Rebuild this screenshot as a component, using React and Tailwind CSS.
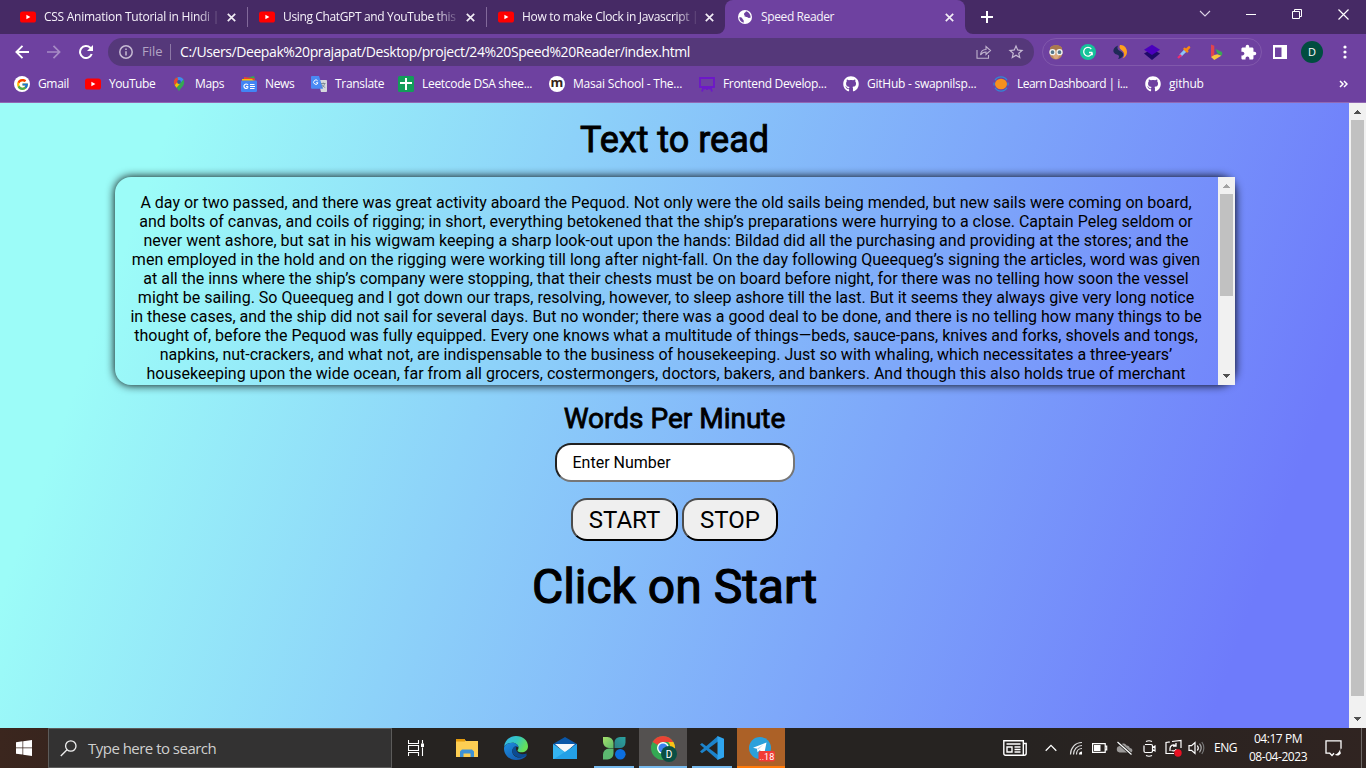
import React from 'react';
import { FcGoogle } from 'react-icons/fc';
import { FaGithub } from 'react-icons/fa';
import { MdExtension, MdStarBorder } from 'react-icons/md';

const YouTube = () => (
  <svg width="16" height="16" viewBox="0 0 16 16" className="shrink-0">
    <rect x="0" y="2.4" width="16" height="11.2" rx="2.6" fill="#f00" />
    <path d="M6.4 5.7v4.6L10.4 8z" fill="#fff" />
  </svg>
);

const Close = () => (
  <svg width="9" height="9" viewBox="0 0 9 9" className="shrink-0">
    <path d="M.8.8l7.4 7.4M8.2.8L.8 8.2" stroke="#f1ecf5" strokeWidth="1.7" />
  </svg>
);

const tabs = [
  { title: 'CSS Animation Tutorial in Hindi |', cls: 'pl-[20px] w-[248px]', track: 'tracking-[-0.26px]' },
  { title: 'Using ChatGPT and YouTube this', cls: 'pl-[11px] w-[239px]', track: 'tracking-[-0.36px]' },
  { title: 'How to make Clock in Javascript |', cls: 'pl-[11px] w-[239px]', track: 'tracking-[-0.32px]' },
];

function TabStrip() {
  return (
    <div className="flex h-[34px] bg-[#462a65] text-[12px] text-[#f6f2fa]">
      {tabs.map((t, i) => (
        <div key={t.title} className={`relative flex shrink-0 items-center ${t.cls}`}>
          <YouTube />
          <div className={`ml-[8px] w-[174px] whitespace-nowrap [mask-image:linear-gradient(90deg,#000_88%,rgba(0,0,0,0.15)_100%)] ${t.track}`}>
            {t.title}
          </div>
          <div className="ml-[9px] flex"><Close /></div>
          {i < 2 && <div className="absolute right-0 top-[7px] h-[20px] w-px bg-[#82699b]" />}
        </div>
      ))}
      <div className="relative -ml-px flex w-[240px] shrink-0 items-center rounded-t-[8px] bg-[#6e41a0] pl-[13px]">
        <svg className="absolute -left-[8px] bottom-0" width="8" height="8"><path d="M8 0v8H0a8 8 0 0 0 8-8z" fill="#6e41a0" /></svg>
        <svg className="absolute -right-[8px] bottom-0" width="8" height="8"><path d="M0 0v8h8a8 8 0 0 1-8-8z" fill="#6e41a0" /></svg>
        <svg width="14" height="14" viewBox="0 0 14 14" className="shrink-0">
          <circle cx="7" cy="7" r="7" fill="#fff" />
          <path d="M1.2 7.6c1.6-.6 2.8 0 3.2 1.2.3 1 1.400 1 1.300 2v1.900C3.300 12.200 1.400 10.300 1.200 7.600zM8 1.300c-.2 1.500-1.600 1.300-2 2.500-.3 1 .8 1.200.6 2.200-.1.800 1.200 1 2.200.9 1-.1 1 .8 2 1 .7.1 1.300-.2 1.900-.5C12.600 4.400 10.800 1.900 8 1.300z" fill="#6e41a0" />
        </svg>
        <div className="ml-[9px] w-[184px] tracking-[-0.38px]">Speed Reader</div>
        <Close />
      </div>
      <div className="flex w-[45px] items-center pl-[16px]">
        <svg width="12" height="12" viewBox="0 0 12 12"><path d="M6 0v12M0 6h12" stroke="#fff" strokeWidth="2" /></svg>
      </div>
      <div className="ml-auto flex h-[28px] items-center">
        <div className="flex w-[46px] justify-center"><svg width="12" height="8" viewBox="0 0 12 8"><path d="M1 1l5 5 5-5" fill="none" stroke="#ddd3e6" strokeWidth="1.1" /></svg></div>
        <div className="flex w-[46px] justify-center"><svg width="10" height="10" viewBox="0 0 10 10"><path d="M0 5.500h10" stroke="#fff" /></svg></div>
        <div className="flex w-[46px] justify-center"><svg width="10" height="10" viewBox="0 0 10 10"><path d="M.5 2.500h7v7h-7zM2.500 2.500v-2h7v7h-2" fill="none" stroke="#fff" /></svg></div>
        <div className="flex w-[46px] justify-center"><svg width="11" height="11" viewBox="0 0 11 11"><path d="M.5.5l10 10M10.500.5l-10 10" stroke="#fff" strokeWidth="1.200" /></svg></div>
      </div>
    </div>
  );
}

const Owl = () => (
  <svg width="16" height="16" viewBox="0 0 16 16">
    <path d="M2 5C2 0 14 0 14 5l.5 3.500c0 4-3 7-6.500 7s-6.500-3-6.500-7z" fill="#c08c5c" />
    <path d="M2 5C2 0 14 0 14 5l-1 1H3z" fill="#a9784e" />
    <path d="M5 10h6c0 3-1 5-3 5s-3-2-3-5z" fill="#dba97f" />
    <circle cx="4.500" cy="8.200" r="2.500" fill="#54788a" stroke="#f2f5f5" strokeWidth="1.300" />
    <circle cx="11.500" cy="8.200" r="2.500" fill="#54788a" stroke="#f2f5f5" strokeWidth="1.300" />
  </svg>
);
const Grammarly = () => (
  <svg width="16" height="16" viewBox="0 0 16 16">
    <circle cx="8" cy="8" r="8" fill="#15c39a" />
    <path d="M11.300 5A4.300 4.300 0 1 0 12 9.300M12.300 8.500H9M12.200 8.500v2.700" fill="none" stroke="#fff" strokeWidth="1.300" />
  </svg>
);
const Swirl = () => (
  <svg width="16" height="16" viewBox="0 0 16 16">
    <path d="M6 1.500C2 3 0 7 2.500 9.300c2 2 4.500 1.200 4.500 3.200 0 1.500-1 2.500-1 2.500 3-.4 6-2.500 5-5.500C10 7 6 7 5.500 4.500 5.300 3.200 6 1.500 6 1.500z" fill="#1e2a56" />
    <path d="M8 1c4-.5 7 3 7 7 0 3-2 5.500-4.500 6.500C13 11.500 12.500 9 10.500 7S6.500 4 8 1z" fill="#ff9f1c" />
  </svg>
);
const Layers = () => (
  <svg width="16" height="16" viewBox="0 0 16 16">
    <path d="M0 9.500L8 5l8 4.500L8 16z" fill="#1e0a68" />
    <path d="M0 5.800L8 .8l8 5L8 11z" fill="#4b00bd" />
  </svg>
);
const Dropper = () => (
  <svg width="16" height="16" viewBox="0 0 16 16">
    <path d="M4.500 11.500L9.300 6.600" stroke="#8ec5f8" strokeWidth="3" />
    <path d="M2 14l3.200-3" stroke="#f02c72" strokeWidth="2.200" />
    <path d="M8.600 4.800l2.600 2.600M10.400 6L13 3.400" stroke="#f98a12" strokeWidth="2.600" strokeLinecap="round" />
  </svg>
);
const Bing = () => (
  <svg width="16" height="16" viewBox="0 0 16 16">
    <path d="M3 .5l3.300 1.200v9.500L3 13z" fill="#e0444e" />
    <path d="M7.500 5l6 2.700c1 .6 1.200 3-.2 4.100L9.300 9.200z" fill="#3aa757" />
    <path d="M3 13l3.300-2 3-.7 4 1.500L6.300 16z" fill="#f8c63d" />
  </svg>
);

function Toolbar() {
  return (
    <div className="flex h-[36px] items-center bg-[#6e41a0] text-white">
      <div className="flex w-[108px] items-center pl-[15px]">
        <svg width="14" height="14" viewBox="0 0 14 14" className="shrink-0"><path d="M14 7H1.500M7.500.8L1.400 7l6.100 6.200" fill="none" stroke="#fff" strokeWidth="1.900" /></svg>
        <svg width="14" height="14" viewBox="0 0 14 14" className="ml-[18px] shrink-0"><path d="M0 7h12.500M6.500.8L12.600 7l-6.100 6.200" fill="none" stroke="#a78bc5" strokeWidth="1.700" /></svg>
        <svg width="14" height="14" viewBox="0 0 14 14" className="ml-[18px] shrink-0"><path d="M12.700 9A6 6 0 1 1 11.300 2.800L12.500 4" fill="none" stroke="#fff" strokeWidth="2" /><path d="M14 0v6H8z" fill="#fff" /></svg>
      </div>
      <div className="flex h-[28px] w-[926px] shrink-0 items-center rounded-full bg-[#55387a] pl-[11px]">
        <svg width="14" height="14" viewBox="0 0 14 14" className="shrink-0"><circle cx="7" cy="7" r="6.200" fill="none" stroke="#c6bad3" strokeWidth="1.500" /><path d="M7 6.200v4.300M7 3.400v1.600" stroke="#c6bad3" strokeWidth="1.500" /></svg>
        <div className="ml-[9px] w-[28px] text-[13px] text-[#b3a4c4]">File</div>
        <div className="h-[16px] w-px bg-[#8d78a6]" />
        <div className="ml-[9px] whitespace-nowrap text-[14px] leading-[20px] tracking-[-0.41px]">C:/Users/Deepak%20prajapat/Desktop/project/24%20Speed%20Reader/index.html</div>
        <svg width="16" height="14" viewBox="0 0 16 14" className="ml-auto shrink-0"><path d="M1 5v8.300h11.500V10M4.500 10c.3-3.600 2.500-5.400 5.500-5.500V1.500l4.500 4-4.500 4V7C7.500 7 5.800 8 4.500 10z" fill="none" stroke="#c0b2ce" strokeWidth="1.100" /></svg>
        <MdStarBorder className="ml-[15px] mr-[9px] shrink-0 text-[#c6bad3]" size={18} />
      </div>
      <div className="ml-[8px] flex h-[28px] w-[220px] shrink-0 items-center gap-[16px] rounded-full border border-[#8158ac] pl-[5px]">
        <Owl /><Grammarly /><Swirl /><Layers /><Dropper /><Bing />
        <MdExtension size={17} className="shrink-0" />
      </div>
      <svg width="14" height="14" viewBox="0 0 14 14" className="ml-[11px] shrink-0"><path d="M0 0h14v14H0zM2 2.500v9.500h6.500V2.500z" fill="#fff" fillRule="evenodd" /></svg>
      <div className="ml-[14px] flex h-[22px] w-[22px] shrink-0 items-center justify-center rounded-full bg-[#004d40] text-[11px]">D</div>
      <svg width="4" height="14" viewBox="0 0 4 14" className="ml-[20px] shrink-0"><circle cx="2" cy="2" r="1.600" fill="#fff" /><circle cx="2" cy="7" r="1.600" fill="#fff" /><circle cx="2" cy="12" r="1.600" fill="#fff" /></svg>
    </div>
  );
}

const icons = {
  google: <div className="flex size-[16px] items-center justify-center rounded-full bg-white"><FcGoogle size={13} /></div>,
  youtube: <YouTube />,
  maps: (
    <svg width="16" height="16" viewBox="0 0 16 16">
      <path d="M8 15.500c-.7-3-5.200-5.200-5.200-9.300a5.200 5.200 0 0 1 10.400 0C13.200 10.300 8.700 12.500 8 15.500z" fill="#34a853" />
      <path d="M3.800 9.300L9.700 2.500 6 1.400A5.200 5.200 0 0 0 3.200 8z" fill="#ea4335" />
      <path d="M6.500 1.200A5.300 5.300 0 0 1 12.500 3.600L8 8.500z" fill="#4285f4" />
      <path d="M3.800 9.300L6.800 5.500l2.600 1.800L5.500 11.700z" fill="#fbbc04" />
      <circle cx="8" cy="6" r="1.900" fill="#31589e" />
    </svg>
  ),
  news: (
    <svg width="16" height="16" viewBox="0 0 16 16">
      <path d="M1.500 3L13 0l1.500 5h-13z" fill="#34a853" /><path d="M3 1l11 1.500V6H3z" fill="#ea4335" /><path d="M1 3h10l3 3H1z" fill="#fbbc04" />
      <rect x="0" y="4.500" width="16" height="11.500" rx="1.200" fill="#4285f4" />
      <path d="M7 9A2.200 2.200 0 1 0 7.100 11.200M7.300 10.500H5M9 8.500h4.500M9 10.500h5M9 12.500h4.500" fill="none" stroke="#fff" strokeWidth="1.200" />
    </svg>
  ),
  translate: (
    <svg width="16" height="16" viewBox="0 0 16 16">
      <path d="M7 4h8.200c.5 0 .8.400.8.800V15c0 .5-.3 1-.8 1H10z" fill="#d5d8dc" />
      <path d="M1 0h7l4 12.800H1a1 1 0 0 1-1-1V1a1 1 0 0 1 1-1z" fill="#4a8af4" />
      <path d="M6.700 4.900A2.200 2.200 0 1 0 7 6.800H5" fill="none" stroke="#fff" />
      <path d="M10 7.500h4.500M12.200 6.500v1M13.500 7.500c0 2-1.500 3.500-3 4M11 8.500c.5 1.500 2 2.500 3.200 3" fill="none" stroke="#6b7d8a" strokeWidth=".8" />
    </svg>
  ),
  sheet: <svg width="16" height="16"><rect width="16" height="16" rx="1.500" fill="#139d5a" /><path d="M8 2v12M2 7h12" stroke="#fff" strokeWidth="2" /></svg>,
  masai: <div className="flex size-[16px] items-center justify-center rounded-full bg-white pb-[3px] text-[13px] font-bold leading-[13px] text-[#352416]">m</div>,
  board: <svg width="16" height="16"><path d="M1 2h14v9H1zM4.500 11L3 15.500M11.500 11L13 15.500M8 11v3M5 13l3-2 3 2" fill="none" stroke="#6d18c8" strokeWidth="1.800" /></svg>,
  github: <FaGithub size={16} />,
  learn: (
    <svg width="16" height="16"><ellipse cx="8" cy="8" rx="6" ry="5.200" fill="#f7901e" /><path d="M2 4.200C4.500-.2 11.500-.2 14 4.200M2 11.800c2.500 4.400 9.500 4.400 12 0M1 6.500v3M15 6.500v3" fill="none" stroke="#3486d3" strokeWidth="1.300" /></svg>
  ),
};

const bookmarks = [
  ['google', 'Gmail', 'w-[71px]', 'tracking-[-0.35px]'],
  ['youtube', 'YouTube', 'w-[86px]', 'tracking-[-0.45px]'],
  ['maps', 'Maps', 'w-[70px]', 'tracking-[-0.35px]'],
  ['news', 'News', 'w-[70px]', 'tracking-[-0.35px]'],
  ['translate', 'Translate', 'w-[87px]', 'tracking-[-0.3px]'],
  ['sheet', 'Leetcode DSA shee...', 'w-[151px]', 'tracking-[-0.3px]'],
  ['masai', 'Masai School - The...', 'w-[150px]', 'tracking-[-0.2px]'],
  ['board', 'Frontend Develop...', 'w-[144px]', 'tracking-[-0.33px]'],
  ['github', 'GitHub - swapnilsp...', 'w-[150px]', 'tracking-[-0.25px]'],
  ['learn', 'Learn Dashboard | i...', 'w-[152px]', 'tracking-[-0.53px]'],
  ['github', 'github', 'w-[90px]', 'tracking-[-0.2px]'],
];

function Bookmarks() {
  return (
    <div className="flex h-[33px] border-b border-[#9168b4] bg-[#6e41a0] pb-[4px] pl-[14px] text-[12px] text-white">
      {bookmarks.map(([icon, label, w, track]) => (
        <div key={label} className={`flex shrink-0 items-center ${w}`}>
          <div className="w-[24px] shrink-0">{icons[icon]}</div>
          <span className={`whitespace-nowrap ${track}`}>{label}</span>
        </div>
      ))}
      <div className="ml-auto mr-[18px] flex items-center">
        <svg width="9" height="8" viewBox="0 0 9 8"><path d="M1 1l3 3-3 3M5 1l3 3-3 3" fill="none" stroke="#fff" strokeWidth="1.500" /></svg>
      </div>
    </div>
  );
}

const lines = [
  'A day or two passed, and there was great activity aboard the Pequod. Not only were the old sails being mended, but new sails were coming on board,',
  'and bolts of canvas, and coils of rigging; in short, everything betokened that the ship’s preparations were hurrying to a close. Captain Peleg seldom or',
  'never went ashore, but sat in his wigwam keeping a sharp look-out upon the hands: Bildad did all the purchasing and providing at the stores; and the',
  'men employed in the hold and on the rigging were working till long after night-fall. On the day following Queequeg’s signing the articles, word was given',
  'at all the inns where the ship’s company were stopping, that their chests must be on board before night, for there was no telling how soon the vessel',
  'might be sailing. So Queequeg and I got down our traps, resolving, however, to sleep ashore till the last. But it seems they always give very long notice',
  'in these cases, and the ship did not sail for several days. But no wonder; there was a good deal to be done, and there is no telling how many things to be',
  'thought of, before the Pequod was fully equipped. Every one knows what a multitude of things—beds, sauce-pans, knives and forks, shovels and tongs,',
  'napkins, nut-crackers, and what not, are indispensable to the business of housekeeping. Just so with whaling, which necessitates a three-years’',
  'housekeeping upon the wide ocean, far from all grocers, costermongers, doctors, bakers, and bankers. And though this also holds true of merchant',
];

const Arrow = ({ down, faded }) => (
  <svg width="17" height="17" shapeRendering="crispEdges" className="shrink-0">
    <path d={down ? 'M5 6h7v1h-1v1h-1v1h-1v1h-1v-1h-1v-1h-1v-1h-1z' : 'M5 11h7v-1h-1v-1h-1v-1h-1v-1h-1v1h-1v1h-1v1h-1z'} fill={faded ? '#a3a3a3' : '#505050'} />
  </svg>
);

function Page() {
  return (
    <div className="flex h-[625px] font-['Roboto',sans-serif] text-black">
      <div className="flex w-[1349px] flex-col items-center bg-[linear-gradient(109.6deg,rgb(156,252,248)_11.2%,rgb(110,123,251)_91.1%)]">
        <h1 className="mt-[15px] h-[44px] whitespace-nowrap text-[36px] leading-[44px] [-webkit-text-stroke:0.9px_#000]">Text to read</h1>
        <div className="mt-[15px] h-[208px] w-[1120px] rounded-[16px] shadow-[0_0_10px_#000]">
          <div className="flex h-full overflow-hidden rounded-l-[16px]">
            <div className="flex-1 pt-[16px] text-center text-[16px] leading-[19px]">
              {lines.map((l) => <p key={l} className="whitespace-nowrap">{l}</p>)}
            </div>
            <div className="flex w-[17px] flex-col bg-[#f1f1f1]">
              <Arrow faded />
              <div className="mx-[2px] h-[102px] bg-[#c1c1c1]" />
              <div className="mt-auto flex"><Arrow down /></div>
            </div>
          </div>
        </div>
        <h2 className="mt-[17px] h-[34px] whitespace-nowrap text-[28px] leading-[34px] [-webkit-text-stroke:0.8px_#000]">Words Per Minute</h2>
        <div className="mt-[7px] flex h-[39px] w-[240px] items-center rounded-[16px] border-2 border-b-[#767676] border-l-[#212121] border-r-[#767676] border-t-[#212121] bg-white pl-[16px] text-[16px]">Enter Number</div>
        <div className="mt-[16px] flex gap-[4px] text-[24px]">
          <button className="flex h-[43px] w-[107px] items-center justify-center rounded-[16px] border-2 border-b-black border-l-[#4c4c4c] border-r-black border-t-[#4c4c4c] bg-[#efefef]">START</button>
          <button className="flex h-[43px] w-[96px] items-center justify-center rounded-[16px] border-2 border-b-black border-l-[#4c4c4c] border-r-black border-t-[#4c4c4c] bg-[#efefef]">STOP</button>
        </div>
        <div className="mt-[17px] h-[57px] whitespace-nowrap text-[48px] leading-[57px] [-webkit-text-stroke:1.2px_#000]">Click on Start</div>
      </div>
      <div className="flex w-[17px] flex-col bg-[#f1f1f1]">
        <Arrow />
        <div className="mx-[2px] h-[576px] bg-[#c1c1c1]" />
        <div className="mt-auto flex"><Arrow down /></div>
      </div>
    </div>
  );
}

const apps = [
  {
    cls: '', bar: '', icon: (
      <svg width="22" height="18" viewBox="0 0 22 18"><path d="M0 0h8l2 2h12v16H0z" fill="#fdce53" /><path d="M0 0h9v2.500H0z" fill="#e49b0d" /><path d="M4 18v-5.500L6 10.500h10l2 2V18h-3.500v-3.500h-7V18z" fill="#3e92d6" /></svg>
    ),
  },
  {
    cls: '', bar: '', icon: (
      <svg width="24" height="24" viewBox="0 0 24 24">
        <defs>
          <linearGradient id="e1" x1="0" y1="0" x2="1" y2=".4"><stop offset="0" stopColor="#35b5ee" /><stop offset=".55" stopColor="#34c7c0" /><stop offset="1" stopColor="#66e058" /></linearGradient>
          <linearGradient id="e2" x1="0" y1="0" x2="1" y2="1"><stop offset="0" stopColor="#1d8fe0" /><stop offset="1" stopColor="#124fa3" /></linearGradient>
        </defs>
        <path d="M0 11C.8 4 6 0 12 0c7 0 12 4.700 12 10.300 0 4-3.200 6-6.200 6-2.800 0-4.300-1-4.300-1.900 0-.6 1-1 1-2.900 0-2.300-2.500-4.700-6-4.700C4.500 6.800 1.200 8.500 0 11z" fill="url(#e1)" />
        <path d="M0 12.500C0 9 4 6.800 8.500 6.800c3.500 0 6 2.400 6 4.700C12.500 9 8.300 11 8.300 15c0 4.500 4.500 7.500 9 6.300 2.500-.7 4-2 4.800-2.200.4 0 .5.400.2.800C20 22.600 16.300 24 12 24 5 24 0 18.500 0 12.500z" fill="url(#e2)" />
        <path d="M8.300 15c0-3 2-5 4.500-5-1.500 2-.8 5.500 2.200 7.200 3 1.600 6 .9 7.200.3 1 0 .3 1.400 0 1.800-1.500 1.600-3.700 2.200-5.500 2.200-4.200 0-8.400-2.500-8.400-6.500z" fill="#0c4b91" />
      </svg>
    ),
  },
  {
    cls: '', bar: '', icon: (
      <svg width="24" height="22" viewBox="0 0 24 22"><path d="M0 7L12 0l12 7v3H0z" fill="#0a57a8" /><path d="M2 7h20l-10 9z" fill="#f5f7fa" /><path d="M0 7l12 8 12-8v15H0z" fill="#35b4f1" /><path d="M24 7v15H1L15 13z" fill="#1490df" opacity=".55" /></svg>
    ),
  },
  {
    cls: '', bar: 'w-[40px] bg-[#76b9ed]', icon: (
      <svg width="24" height="24" viewBox="0 0 24 24">
        <defs>
          <linearGradient id="c1" x1="0" y1="0" x2="1" y2="1"><stop offset="0" stopColor="#a5e06a" /><stop offset="1" stopColor="#5cb96b" /></linearGradient>
          <linearGradient id="c2" x1="1" y1="0" x2="0" y2="1"><stop offset="0" stopColor="#2aa3a0" /><stop offset="1" stopColor="#2c7f85" /></linearGradient>
        </defs>
        <path d="M1 1h4.500a6 6 0 0 1 6 6v5H7a6 6 0 0 1-6-6z" fill="url(#c1)" /><path d="M23.500 1H18a5.500 5.500 0 0 0-5.500 5.500V12H18a5.500 5.500 0 0 0 5.500-5.500z" fill="url(#c2)" /><path d="M1 23.500h4.500a6 6 0 0 0 6-6V12.500H7a6 6 0 0 0-6 6z" fill="#5cb870" /><circle cx="18.300" cy="18.300" r="5.300" fill="#0c6fe0" />
      </svg>
    ),
  },
  {
    cls: 'bg-[#545150]', bar: 'w-[48px] bg-[#76b9ed]', icon: (
      <svg width="28" height="28" viewBox="0 0 28 28">
        <circle cx="14" cy="14" r="12" fill="#34a853" />
        <path d="M14 2a12 12 0 0 1 10.400 6H14a6 6 0 0 0-5.200 3L3.600 8A12 12 0 0 1 14 2z" fill="#ea4335" />
        <path d="M24.400 8A12 12 0 0 1 14 26l5.200-9A6 6 0 0 0 19.200 8z" fill="#fbc116" />
        <circle cx="14" cy="14" r="6" fill="#fff" /><circle cx="14" cy="14" r="4.600" fill="#3b82ee" />
        <circle cx="20" cy="20" r="8" fill="#0a4f44" />
        <text x="20" y="23.600" textAnchor="middle" fill="#fff" fontSize="10" fontFamily="Roboto">D</text>
      </svg>
    ),
  },
  {
    cls: '', bar: 'w-[40px] bg-[#76b9ed]', icon: (
      <svg width="24" height="24" viewBox="0 0 24 24"><path d="M0 8.600l2-1.700L18 19v5z" fill="#1c83cb" /><path d="M18 0v5.500L2 17.300l-2-1.700z" fill="#1c83cb" /><path d="M17.500 0L24 2.800v18.400L17.500 24z" fill="#2fa5ef" /></svg>
    ),
  },
  {
    cls: 'bg-[#ac6127]', bar: 'w-[48px] bg-[#ff7a0a]', icon: (
      <svg width="30" height="28" viewBox="0 0 30 28">
        <circle cx="14" cy="14" r="11" fill="#2ba0db" /><path d="M7 13.700L20.500 8.500 18.300 19.500l-4.600-3.200-2.200 2-.5-3.600z" fill="#fff" /><path d="M11 14.700l6.500-4.200-5.200 5z" fill="#b7d5ea" />
        <rect x="12.500" y="17" width="16.500" height="10.500" rx="2" fill="#f23b35" />
        <text x="20.800" y="25.700" textAnchor="middle" fill="#fff" fontSize="9" fontFamily="Roboto">..18</text>
      </svg>
    ),
  },
];

function Taskbar() {
  return (
    <div className="flex h-[40px] bg-[linear-gradient(90deg,#3b261e_0,#38251e_48px,#262321_390px,#262321_1000px,#302421_1366px)] text-white">
      <div className="flex w-[48px] shrink-0 items-center justify-center">
        <svg width="16" height="16" viewBox="0 0 16 16"><path d="M0 2.200l6.500-.9v6.200H0zM7.200 1.200L16 0v7.500H7.200zM0 8.200h6.500v6.300L0 13.700zM7.200 8.200H16V16l-8.800-1.300z" fill="#fff" /></svg>
      </div>
      <div className="flex w-[344px] shrink-0 items-center border border-[#5c5b5a] bg-[#333232] pl-[11px]">
        <svg width="17" height="17" viewBox="0 0 17 17" className="shrink-0"><circle cx="10.800" cy="6" r="5.200" fill="none" stroke="#f0f0f0" strokeWidth="1.300" /><path d="M7 9.800L.8 16" stroke="#f0f0f0" strokeWidth="1.300" /></svg>
        <span className="ml-[11px] whitespace-nowrap text-[15px] tracking-[-0.52px] text-[#cfcfcf]">Type here to search</span>
      </div>
      <div className="flex w-[51px] shrink-0 items-center pl-[16px]">
        <svg width="17" height="16" viewBox="0 0 17 16"><path d="M.5 0v3.500h10V0M.5 16v-3.500h10V16M.5 5.500h10v5H.5zM14.500 0v3.500M14.500 7.500V16" fill="none" stroke="#fff" strokeWidth="1.100" /><rect x="13" y="3.500" width="3" height="3.500" fill="#fff" /></svg>
      </div>
      <div className="flex gap-px">
        {apps.map((a, i) => (
          <div key={i} className={`relative flex w-[48px] items-center justify-center ${a.cls}`}>
            {a.icon}
            {a.bar && <div className={`absolute bottom-0 left-1/2 h-[2px] -translate-x-1/2 ${a.bar}`} />}
          </div>
        ))}
      </div>
      <div className="ml-auto flex shrink-0 items-center">
        <svg width="24" height="16" viewBox="0 0 24 16"><path d="M.8.8h19.500v14.400H2.500c-1 0-1.700-.7-1.700-1.700zM20.300 3.500h2.900v9.700c0 1.200-.8 2-2 2h-2M3.500 4h14M11.500 7h6M11.500 9.500h6M11.500 12h6M4 7h5v5H4z" fill="none" stroke="#fff" strokeWidth="1.400" /></svg>
        <svg width="12" height="8" viewBox="0 0 12 8" className="ml-[18px]"><path d="M.7 6.700L6 1.400l5.300 5.300" fill="none" stroke="#fff" strokeWidth="1.300" /></svg>
        <svg width="14" height="14" viewBox="0 0 14 14" className="ml-[12px]"><path d="M1.500 13.500C1.500 7 6 1.500 13 1.500M4.500 13.500C4.500 8.500 8 4.500 13 4.500M7.500 13.500c0-3.300 2.200-6 5.500-6" fill="none" stroke="#ddd" strokeWidth="1.200" /><path d="M10 13.500c0-2 1-3 3-3v3z" fill="#fff" /></svg>
        <svg width="16" height="10" viewBox="0 0 16 10" className="ml-[9px]"><path d="M.6.6h12.600v8.800H.6zM13.200 3.200h1.500v3.600h-1.500" fill="none" stroke="#fff" strokeWidth="1.200" /><path d="M2 2h6.500v6H2z" fill="#fff" /></svg>
        <svg width="17" height="14" viewBox="0 0 17 14" className="ml-[8px]"><path d="M3.500 11.500a3.300 3.300 0 0 1 0-6.500C4.500 2 9 1.500 10.500 4.500c2 0 3 1 3.200 2.500 3.500 0 3.500 4.500.5 4.500z" fill="#9b9998" /><path d="M1.500 1l14 12.500" stroke="#262321" strokeWidth="3" /><path d="M1.500 1l14 12.500" stroke="#fff" strokeWidth="1.200" /></svg>
        <svg width="14" height="17" viewBox="0 0 14 17" className="ml-[10px]"><path d="M2 4.500h6c.8 0 1.500.7 1.500 1.500v5c0 .8-.7 1.500-1.500 1.500H2.500C1.700 12.500 1 11.800 1 11V5.500M9.500 7.500L12 6v5L9.500 9.500M3 1.500C5 .5 7 .5 9 1.500M3 15.500c2 1 4 1 6 0" fill="none" stroke="#fff" strokeWidth="1.200" /></svg>
        <svg width="18" height="18" viewBox="0 0 18 18" className="ml-[8px]"><path d="M9 14.500H1V3.500l3-.5M7 2.500l9-1V9M1 3.500L5 3" fill="none" stroke="#fff" strokeWidth="1.200" /><path d="M5 12V9.500C5 6.500 8 5 10.500 6.500M11 4v3H8M11 10c0 1.500-2 2.500-4.500 1.500" fill="none" stroke="#fff" strokeWidth="1.300" /><circle cx="13" cy="14" r="3.700" fill="#e81123" /></svg>
        <svg width="17" height="14" viewBox="0 0 17 14" className="ml-[5px]"><path d="M1 4.700h2.500L7 1.500v11L3.500 9.300H1z" fill="none" stroke="#fff" strokeWidth="1.200" /><path d="M9.300 4.500c1.200 1.500 1.200 3.500 0 5" fill="none" stroke="#fff" strokeWidth="1.200" /><path d="M11.500 2.700c2 2.500 2 6 0 8.600" fill="none" stroke="#aaa" strokeWidth="1.200" /><path d="M13.800 1c2.700 3.500 2.700 8.500 0 12" fill="none" stroke="#777" strokeWidth="1.200" /></svg>
        <span className="ml-[9px] w-[24px] whitespace-nowrap text-[12px] tracking-[-0.5px]">ENG</span>
        <div className="ml-[5px] flex w-[70px] flex-col items-center whitespace-nowrap text-[12px] leading-[18px] tracking-[-0.45px]">
          <span>04:17 PM</span><span>08-04-2023</span>
        </div>
        <svg width="18" height="17" viewBox="0 0 18 17" className="ml-[12px]"><path d="M9 13.200L7 15.500 4.800 13.200H1V.8h15v8" fill="none" stroke="#fff" strokeWidth="1.300" /><path d="M15.500 8.500c-1 3 .5 4.500.5 4.500-1 2.500-4 3.500-6.500 1.500 3 0 4.500-2.500 6-6z" fill="#fff" /></svg>
        <div className="ml-[18px] mr-[4px] h-[40px] w-px bg-[#6d6866]" />
      </div>
    </div>
  );
}

export default function App() {
  return (
    <div className="h-[768px] w-[1366px] overflow-hidden font-['Open_Sans','Noto_Sans',sans-serif]">
      <TabStrip />
      <Toolbar />
      <Bookmarks />
      <Page />
      <Taskbar />
    </div>
  );
}
